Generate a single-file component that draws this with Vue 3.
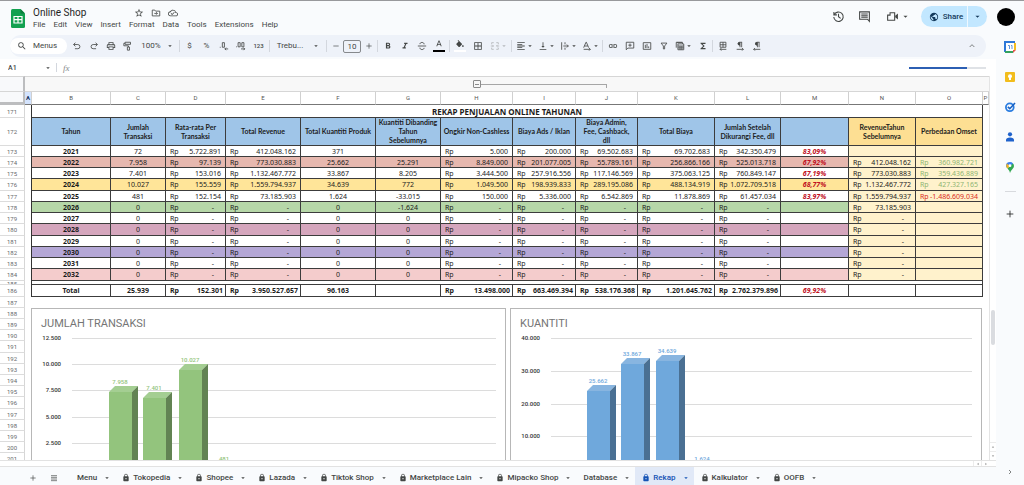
<script setup>
import { h, ref } from 'vue'

const glyphs = {
  search: { f: 'M15.5 14h-.79l-.28-.27A6.47 6.47 0 0 0 16 9.5 6.5 6.5 0 1 0 9.5 16c1.61 0 3.09-.59 4.23-1.57l.27.28v.79l5 4.99L20.49 19l-4.99-5zm-6 0C7.01 14 5 11.99 5 9.5S7.01 5 9.5 5 14 7.01 14 9.5 11.99 14 9.5 14z' },
  undo: { s: 'M8 4 4 8.500l4 4.500M4 8.500h10a5 5 0 0 1 0 10H7' },
  redo: { s: 'M16 4l4 4.500-4 4.500M20 8.500H10a5 5 0 0 0 0 10h7' },
  print: { f: 'M19 8h-1V3H6v5H5c-1.66 0-3 1.34-3 3v6h4v4h12v-4h4v-6c0-1.66-1.34-3-3-3zM8 5h8v3H8V5zm8 12v2H8v-4h8v2zm2-2v-2H6v2H4v-4c0-.55.45-1 1-1h14c.55 0 1 .45 1 1v4h-2z' },
  paint: { s: 'M5 3h13v5H5zM5 5.500H2v6h11v3M10.500 14.500h5V22h-5z' },
  decLess: { s: 'M3 14v2M8 4h5v11H8zM22 19h-8M17 16l-3 3 3 3' },
  decMore: { s: 'M1 13v2M5 4h5v10H5zM14 4h5v10h-5zM12 19h9M18 16l3 3-3 3' },
  bold: { f: 'M15.6 10.79c.97-.67 1.65-1.77 1.65-2.79 0-2.26-1.75-4-4-4H7v14h7.04c2.09 0 3.71-1.7 3.71-3.79 0-1.52-.86-2.82-2.15-3.42zM10 6.500h3c.83 0 1.500.67 1.500 1.500s-.67 1.500-1.500 1.500h-3v-3zm3.500 9H10v-3h3.500c.83 0 1.500.67 1.500 1.500s-.67 1.500-1.500 1.500z' },
  italic: { f: 'M10 4v3h2.21l-3.42 8H6v3h8v-3h-2.21l3.42-8H18V4z' },
  strike: { s: 'M2 12h20M17 8c0-3-2-4.500-5-4.500S7 5 7 7.500M7 16c0 3 2 4.500 5 4.500s5-1.500 5-4' },
  textColor: { f: 'M11 1 5.500 15h2.25l1.12-3h6.25l1.12 3h2.25L13 1h-2zm-1.380 9L12 3.670 14.380 10H9.620z' },
  fill: { f: 'M16.56 8.940 7.620 0 6.210 1.410l2.380 2.380-5.150 5.150a1.490 1.490 0 0 0 0 2.120l5.500 5.500c.29.29.68.44 1.060.44s.77-.15 1.060-.44l5.500-5.500c.59-.58.59-1.530 0-2.120zM19 11.500s-2 2.170-2 3.500c0 1.100.9 2 2 2s2-.9 2-2c0-1.330-2-3.500-2-3.500z' },
  borders: { f: 'M3 3v18h18V3H3zm8 16H5v-6h6v6zm0-8H5V5h6v6zm8 8h-6v-6h6v6zm0-8h-6V5h6v6z' },
  merge: { s: 'M9 4H4v4M15 4h5v4M4 16v4h5M20 16v4h-5M2 12h6M6 9.500 8.500 12 6 14.500M22 12h-6M18 9.500 15.500 12l2.500 2.500' },
  alignLeft: { f: 'M15 15H3v2h12v-2zm0-8H3v2h12V7zM3 13h18v-2H3v2zm0 8h18v-2H3v2zM3 3v2h18V3H3z' },
  alignBottom: { f: 'M16 12h-3V3h-2v9H8l4 4 4-4zM4 19v2h16v-2H4z' },
  overflow: { s: 'M4 3v18M12 3v5M12 16v5M8 12h12M16.500 8.500 20 12l-3.500 3.500' },
  rotate: { s: 'M4 16 9.500 3h1L16 16M6 12h8M4 20h16M17 17l3 3-3 3' },
  link: { f: 'M3.900 12c0-1.710 1.390-3.100 3.100-3.100h4V7H7c-2.760 0-5 2.240-5 5s2.240 5 5 5h4v-1.900H7c-1.710 0-3.100-1.390-3.100-3.100zM8 13h8v-2H8v2zm9-6h-4v1.900h4c1.710 0 3.100 1.390 3.100 3.100s-1.390 3.100-3.100 3.100h-4V17h4c2.760 0 5-2.240 5-5s-2.240-5-5-5z' },
  addComment: { s: 'M3 3h18v14H7l-4 4zM12 6v8M8 10h8' },
  chart: { s: 'M3 4h18v16H3zM8 17V9M12 17V7M16 17v-4' },
  filter: { s: 'M5 5h14l-5.500 7v7h-3v-7z' },
  views: { s: 'M3 16V3h15M7 7h14v14H7zM7 12h14M7 16.500h14M12 12v9M16.500 12v9M4 4h14v3' },
  sigma: { f: 'M18 4H6v2l6.500 6L6 18v2h12v-3h-7l5-5-5-5h7z' },
  sheetDir: { s: 'M5 3h14v12H5zM5 9h14M12 3v12M20 20H5M8 17l-3 3 3 3' },
  ltr: { s: 'M17 3h-6a3.500 3.500 0 0 0 0 7h1M12 3v12M16 3v12M4 20h16M17 17l3 3-3 3', f: 'M12 3h-2a3.500 3.500 0 0 0 0 7h2z' },
  rtl: { s: 'M18 3h-6a3.500 3.500 0 0 0 0 7h1M13 3v12M17 3v12M20 20H4M7 17l-3 3 3 3', f: 'M13 3h-2a3.500 3.500 0 0 0 0 7h2z' },
  up: { s: 'M5 15l7-7 7 7' },
  right: { s: 'M9 6l6 6-6 6' },
  caret: { f: 'M5 9l7 7 7-7z' },
  star: { f: 'M22 9.240l-7.190-.62L12 2 9.190 8.630 2 9.240l5.460 4.730L5.820 21 12 17.270 18.180 21l-1.630-7.030L22 9.240zM12 15.400l-3.760 2.270 1-4.280-3.320-2.880 4.380-.38L12 6.100l1.710 4.040 4.380.38-3.320 2.880 1 4.280L12 15.400z' },
  folder: { s: 'M3 5h6l2 2.500h10V19H3zM8 13h7M12.500 10l3 3-3 3' },
  cloud: { f: 'M19.350 10.040A7.490 7.490 0 0 0 12 4C9.110 4 6.600 5.640 5.350 8.040A5.994 5.994 0 0 0 0 14c0 3.310 2.690 6 6 6h13c2.760 0 5-2.240 5-5 0-2.640-2.050-4.780-4.650-4.960zM19 18H6c-2.210 0-4-1.790-4-4 0-2.050 1.530-3.760 3.560-3.970l1.070-.11.5-.95A5.469 5.469 0 0 1 12 6c2.620 0 4.880 1.860 5.390 4.430l.3 1.500 1.530.11A2.980 2.980 0 0 1 22 15c0 1.650-1.350 3-3 3zm-9-3.820-2.090-2.090L6.500 13.500 10 17l6.010-6.010-1.410-1.410z' },
  history: { s: 'M3.500 3.500v5.500H9M4 9a8.700 8.700 0 1 1-.7 4M12 7v5.500l4 3' },
  comment: { s: 'M3 3.500h18v17.500l-3.500-4H3zM6 7.500h12M6 10.500h12M6 13.500h12' },
  meet: { s: 'M7.500 5H16v14H3V9.500h4.500z', f: 'M17 10.500l5-4v11l-5-4z' },
  globe: { f: 'M12 2C6.480 2 2 6.480 2 12s4.480 10 10 10 10-4.480 10-10S17.520 2 12 2zm-1 17.930c-3.950-.49-7-3.850-7-7.930 0-.62.08-1.210.21-1.790L9 15v1c0 1.100.9 2 2 2v1.930zm6.900-2.540c-.26-.81-1-1.390-1.900-1.390h-1v-3c0-.55-.45-1-1-1H8v-2h2c.55 0 1-.45 1-1V7h2c1.100 0 2-.9 2-2v-.41c2.930 1.190 5 4.060 5 7.410 0 2.080-.8 3.970-2.100 5.390z' },
  lock: { f: 'M18 8h-1V6c0-2.760-2.240-5-5-5S7 3.240 7 6v2H6c-1.100 0-2 .9-2 2v11c0 1.100.9 2 2 2h12c1.100 0 2-.9 2-2V10c0-1.100-.9-2-2-2zm-6 9.500c-1.100 0-2-.9-2-2s.9-2 2-2 2 .9 2 2-.9 2-2 2zM15.100 8H8.900V6c0-1.710 1.390-3.100 3.100-3.100s3.100 1.390 3.100 3.100v2z' },
  plus: { s: 'M12 4v16M4 12h16' },
  minus: { s: 'M4 12h16' },
  list: { s: 'M3 5h18M3 10h18M3 15h18M3 20h18' },
}

const Icon = (props) =>
  h('svg', { viewBox: '0 0 24 24', class: ['icon', 'icon-' + props.name], 'aria-hidden': 'true' }, [
    glyphs[props.name].f && h('path', { d: glyphs[props.name].f, fill: 'currentColor', 'fill-rule': 'evenodd' }),
    glyphs[props.name].s && h('path', { d: glyphs[props.name].s, fill: 'none', stroke: 'currentColor', 'stroke-width': 2 }),
  ])
Icon.props = ['name']

const menus = ['File', 'Edit', 'View', 'Insert', 'Format', 'Data', 'Tools', 'Extensions', 'Help']

const toolsA = [
  { icon: 'undo', label: 'Undo' }, { icon: 'redo', label: 'Redo' },
  { icon: 'print', label: 'Print' }, { icon: 'paint', label: 'Paint format' },
]
const toolsB = [
  { text: '$', label: 'Currency' }, { text: '%', label: 'Percent' },
  { icon: 'decLess', label: 'Decrease decimals' }, { icon: 'decMore', label: 'Increase decimals' },
  { text: '123', label: 'More formats', small: true },
]
const toolsC = [
  { icon: 'bold', label: 'Bold' }, { icon: 'italic', label: 'Italic' },
  { icon: 'strike', label: 'Strikethrough' }, { icon: 'textColor', label: 'Text color', bar: 'ink' },
  { sep: true },
  { icon: 'fill', label: 'Fill color', bar: 'paper' }, { icon: 'borders', label: 'Borders' },
  { icon: 'merge', label: 'Merge cells', drop: true, faded: true },
  { sep: true },
  { icon: 'alignLeft', label: 'Horizontal align', drop: true },
  { icon: 'alignBottom', label: 'Vertical align', drop: true },
  { icon: 'overflow', label: 'Text wrapping', drop: true },
  { icon: 'rotate', label: 'Text rotation', drop: true },
  { sep: true },
  { icon: 'link', label: 'Insert link' }, { icon: 'addComment', label: 'Insert comment' },
  { icon: 'chart', label: 'Insert chart' }, { icon: 'filter', label: 'Create a filter' },
  { icon: 'views', label: 'Filter views', drop: true }, { icon: 'sigma', label: 'Functions' },
  { sep: true },
  { icon: 'sheetDir', label: 'Sheet direction' }, { icon: 'ltr', label: 'Left to right' }, { icon: 'rtl', label: 'Right to left' },
]

const letters = 'ABCDEFGHIJKLMNOP'.split('')
const heads = [
  'Tahun', 'Jumlah\nTransaksi', 'Rata-rata Per\nTransaksi', 'Total Revenue', 'Total Kuantiti Produk',
  'Kuantiti Dibanding\nTahun\nSebelumnya', 'Ongkir Non-Cashless', 'Biaya Ads / Iklan',
  'Biaya Admin,\nFee, Cashback,\ndll', 'Total Biaya', 'Jumlah Setelah\nDikurangi Fee, dll', '',
  'RevenueTahun\nSebelumnya', 'Perbedaan Omset',
]
const money = new Set([2, 3, 6, 7, 8, 9, 10, 12, 13])
const rows = [
  { n: 173, tone: 'plain', c: ['2021', '72', '5.722.891', '412.048.162', '371', '', '5.000', '200.000', '69.502.683', '69.702.683', '342.350.479', '83,09%', '', ''] },
  { n: 174, tone: 'rose', c: ['2022', '7.958', '97.139', '773.030.883', '25.662', '25.291', '8.849.000', '201.077.005', '55.789.161', '256.866.166', '525.013.718', '67,92%', '412.048.162', '360.982.721'] },
  { n: 175, tone: 'plain', c: ['2023', '7.401', '153.016', '1.132.467.772', '33.867', '8.205', '3.444.500', '257.916.556', '117.146.569', '375.063.125', '760.849.147', '67,19%', '773.030.883', '359.436.889'] },
  { n: 176, tone: 'yellow', c: ['2024', '10.027', '155.559', '1.559.794.937', '34.639', '772', '1.049.500', '198.939.833', '289.195.086', '488.134.919', '1.072.709.518', '68,77%', '1.132.467.772', '427.327.165'] },
  { n: 177, tone: 'plain', c: ['2025', '481', '152.154', '73.185.903', '1.624', '-33.015', '150.000', '5.336.000', '6.542.869', '11.878.869', '61.457.034', '83,97%', '1.559.794.937', '-1.486.609.034'] },
  { n: 178, tone: 'green', c: ['2026', '0', '-', '-', '0', '-1.624', '-', '-', '-', '-', '-', '', '73.185.903', ''] },
  ...[[179, '2027', 'plain'], [180, '2028', 'mauve'], [181, '2029', 'plain'], [182, '2030', 'violet'], [183, '2031', 'plain'], [184, '2032', 'pink']].map(
    ([n, year, tone]) => ({ n, tone, c: [year, '0', '-', '-', '0', '0', '-', '-', '-', '-', '-', '', '-', ''] })
  ),
]
const totals = ['Total', '25.939', '152.301', '3.950.527.657', '96.163', '', '13.498.000', '663.469.394', '538.176.368', '1.201.645.762', '2.762.379.896', '69,92%', '', '']
const tail = Array.from({ length: 14 }, (_, i) => 188 + i)

function cellClass(i, v) {
  return {
    year: i === 0,
    pct: i === 11,
    side: i > 11,
    gain: i === 13 && v && v[0] !== '-',
    loss: i === 13 && v && v[0] === '-',
  }
}

const charts = [
  {
    title: 'JUMLAH TRANSAKSI', tone: 'leaf', width: 475, x1: 41, x2: 465, lx: 30,
    grid: [['12.500', 30], ['10.000', 56], ['7.500', 82], ['5.000', 109], ['2.500', 135]],
    bars: [['7.958', 78, 84], ['7.401', 112, 90], ['10.027', 148, 62]], last: ['481', 193],
  },
  {
    title: 'KUANTITI', tone: 'sky', width: 472, x1: 41, x2: 462, lx: 30,
    grid: [['40.000', 30], ['30.000', 63], ['20.000', 96], ['10.000', 128]],
    bars: [['25.662', 77, 83], ['33.867', 111, 56], ['34.639', 146, 53]], last: ['1.624', 192],
  },
]

const tabs = [
  { name: 'Menu' }, { name: 'Tokopedia', lock: true }, { name: 'Shopee', lock: true }, { name: 'Lazada', lock: true },
  { name: 'Tiktok Shop', lock: true }, { name: 'Marketplace Lain', lock: true }, { name: 'Mipacko Shop', lock: true },
  { name: 'Database' }, { name: 'Rekap', lock: true }, { name: 'Kalkulator', lock: true }, { name: 'OOFB', lock: true },
]
const active = ref('Rekap')
const cellName = ref('A1')
const formula = ref('')
const fontSize = ref('10')
</script>

<template>
  <div class="app">
    <header class="top">
      <svg class="logo" viewBox="0 0 14 19" aria-hidden="true">
        <path d="M1.500 0H9.500L14 4.500V17.500Q14 19 12.500 19H1.500Q0 19 0 17.500V1.500Q0 0 1.500 0Z" fill="#12a150" />
        <path d="M9.500 0 14 4.500H9.500Z" fill="#0b7d3c" />
        <path d="M3 7.500H11V14H3ZM3 10.700H11M7 7.500V14" fill="none" stroke="#fff" stroke-width="1.200" />
      </svg>
      <div class="titles">
        <div class="title-row">
          <h1>Online Shop</h1>
          <button aria-label="Star"><Icon name="star" /></button>
          <button aria-label="Move"><Icon name="folder" /></button>
          <button aria-label="Saved to Drive"><Icon name="cloud" /></button>
        </div>
        <nav class="menus">
          <button v-for="m in menus" :key="m">{{ m }}</button>
        </nav>
      </div>
      <div class="actions">
        <button aria-label="Version history"><Icon name="history" /></button>
        <button aria-label="Comments"><Icon name="comment" /></button>
        <button class="meet" aria-label="Join a call"><Icon name="meet" /><Icon name="caret" /></button>
        <div class="share">
          <button class="share-main"><Icon name="globe" />Share</button>
          <button class="share-more" aria-label="Sharing options"><Icon name="caret" /></button>
        </div>
        <button class="avatar" aria-label="Account"></button>
      </div>
    </header>

    <div class="body">
      <main>
        <div class="toolbar">
          <button class="find"><Icon name="search" />Menus</button>
          <button v-for="t in toolsA" :key="t.label" class="tool" :aria-label="t.label"><Icon :name="t.icon" /></button>
          <button class="zoom">100%<Icon name="caret" /></button>
          <i class="sep"></i>
          <button v-for="t in toolsB" :key="t.label" class="tool" :class="{ small: t.small }" :aria-label="t.label">
            <Icon v-if="t.icon" :name="t.icon" /><template v-else>{{ t.text }}</template>
          </button>
          <i class="sep"></i>
          <button class="font">Trebu...<Icon name="caret" /></button>
          <i class="sep"></i>
          <button class="step" aria-label="Decrease font size"><Icon name="minus" /></button>
          <input v-model="fontSize" class="size" aria-label="Font size" />
          <button class="step" aria-label="Increase font size"><Icon name="plus" /></button>
          <i class="sep"></i>
          <template v-for="(t, i) in toolsC" :key="i">
            <i v-if="t.sep" class="sep"></i>
            <button v-else class="tool" :class="[t.bar, { drop: t.drop, faded: t.faded }]" :aria-label="t.label">
              <Icon :name="t.icon" /><Icon v-if="t.drop" name="caret" />
            </button>
          </template>
          <button class="tool collapse" aria-label="Hide menus"><Icon name="up" /></button>
        </div>

        <div class="formula">
          <input v-model="cellName" class="cell-name" aria-label="Name box" />
          <Icon name="caret" />
          <i class="sep"></i>
          <label class="fx" for="fx">fx</label>
          <input id="fx" v-model="formula" class="fx-input" />
          <div class="progress"><div class="progress-fill"></div></div>
        </div>

        <div class="grid-area">
          <div class="sheet">
            <table>
              <colgroup>
                <col class="w25" /><col class="w7" /><col class="w79" /><col class="w55" /><col class="w60" /><col class="w75" />
                <col class="w75" /><col class="w65" /><col class="w72" /><col class="w63" /><col class="w62" /><col class="w77" />
                <col class="w66" /><col class="w68" /><col class="w67" /><col class="w67" /><col class="w6" />
              </colgroup>
              <thead>
                <tr class="groups">
                  <td class="corner"></td>
                  <td colspan="7"></td>
                  <td colspan="3">
                    <div class="group">
                      <button aria-label="Collapse columns"></button><span></span>
                    </div>
                  </td>
                  <td colspan="6"></td>
                </tr>
                <tr class="letters">
                  <td class="corner low"></td>
                  <th v-for="l in letters" :key="l" :class="{ picked: l === 'A' }">{{ l }}</th>
                </tr>
              </thead>
              <tbody>
                <tr class="banner">
                  <th class="num">171</th><td class="edge"></td>
                  <td colspan="14" class="cell">REKAP PENJUALAN ONLINE TAHUNAN</td><td></td>
                </tr>
                <tr class="heads">
                  <th class="num">172</th><td class="edge"></td>
                  <th v-for="(t, i) in heads" :key="i" class="cell" :class="{ gold: i > 11 }">{{ t }}</th><td></td>
                </tr>
              </tbody>
              <tbody class="data">
                <tr v-for="r in rows" :key="r.n" :class="r.tone">
                  <th class="num">{{ r.n }}</th><td class="edge"></td>
                  <td v-for="(v, i) in r.c" :key="i" class="cell" :class="cellClass(i, v)">
                    <div v-if="money.has(i) && v" class="money">
                      <span>Rp</span><span :class="{ dash: v === '-' }">{{ v }}</span>
                    </div>
                    <template v-else>{{ v }}</template>
                  </td>
                  <td></td>
                </tr>
              </tbody>
              <tbody>
                <tr class="thin">
                  <th class="num"><div>185</div></th><td class="edge"></td><td colspan="14" class="cell"></td><td></td>
                </tr>
                <tr class="total">
                  <th class="num">186</th><td class="edge"></td>
                  <td v-for="(v, i) in totals" :key="i" class="cell" :class="{ pct: i === 11 }">
                    <div v-if="money.has(i) && v" class="money"><span>Rp</span><span>{{ v }}</span></div>
                    <template v-else>{{ v }}</template>
                  </td>
                  <td></td>
                </tr>
              </tbody>
              <tbody class="tail">
                <tr>
                  <th class="num">187</th>
                  <td colspan="16" rowspan="15" class="canvas">
                    <div class="charts">
                      <svg v-for="c in charts" :key="c.title" class="chart" :class="c.tone" :viewBox="`0 0 ${c.width} 153`" role="img" :aria-label="c.title">
                        <rect x="0.5" y="0.5" :width="c.width - 1" height="170" class="frame" />
                        <text x="10" y="19" class="chart-title">{{ c.title }}</text>
                        <g v-for="g in c.grid" :key="g[0]">
                          <line :x1="c.x1" :x2="c.x2" :y1="g[1] + 0.5" :y2="g[1] + 0.5" class="line" />
                          <text :x="c.lx" :y="g[1] + 2" class="axis">{{ g[0] }}</text>
                        </g>
                        <g v-for="b in c.bars" :key="b[0]">
                          <rect :x="b[1]" :y="b[2]" width="23" :height="153 - b[2]" class="front" />
                          <path :d="`M${b[1]} ${b[2]}l6-6h23l-6 6z`" class="lid" />
                          <path :d="`M${b[1] + 23} ${b[2]}l6-6V153h-6z`" class="shade" />
                          <text :x="b[1] + 11" :y="b[2] - 8" class="value">{{ b[0] }}</text>
                        </g>
                        <text :x="c.last[1]" y="153" class="value">{{ c.last[0] }}</text>
                      </svg>
                    </div>
                  </td>
                </tr>
                <tr v-for="n in tail" :key="n"><th class="num">{{ n }}</th></tr>
              </tbody>
            </table>
          </div>
          <div class="vbar">
            <div class="thumb"></div>
            <button aria-label="Scroll up"><Icon name="caret" class="flip" /></button>
            <button aria-label="Scroll down"><Icon name="caret" /></button>
          </div>
        </div>

        <div class="hbar">
          <button aria-label="Scroll left"><Icon name="caret" class="left" /></button>
          <button aria-label="Scroll right"><Icon name="caret" class="rightward" /></button>
        </div>
      </main>

      <aside>
        <button aria-label="Calendar">
          <svg viewBox="0 0 12 12"><rect x="1" y="1" width="10" height="10" fill="#fff" /><path d="M1 11V1H11" fill="none" stroke="#2f78d8" stroke-width="2" /><path d="M11 2V9" stroke="#f5bd1f" stroke-width="2" /><path d="M1 11H9" stroke="#35a260" stroke-width="2" /><path d="M9 12V9H12Z" fill="#e5574a" /><path d="M4 4.500h1.500V8M7 4.500h1V8" fill="none" stroke="#5d93dc" /></svg>
        </button>
        <button aria-label="Keep">
          <svg viewBox="0 0 12 12"><rect x="1" y="1" width="10" height="10" rx="1" fill="#f2bd1d" /><circle cx="6" cy="5.200" r="2" fill="#fff" /><rect x="5" y="7" width="2" height="2" fill="#fff" /></svg>
        </button>
        <button aria-label="Tasks">
          <svg viewBox="0 0 12 12"><circle cx="5.800" cy="6.300" r="3.900" fill="none" stroke="#2b7de0" stroke-width="1.800" /><path d="M3.800 5.800 5.800 7.700 11 2" fill="none" stroke="#1761c4" stroke-width="1.600" /></svg>
        </button>
        <button aria-label="Contacts">
          <svg viewBox="0 0 12 12"><circle cx="6" cy="3.300" r="2.100" fill="#1f62cc" /><path d="M2 10.500V9Q2 6.500 6 6.500T10 9V10.500Z" fill="#1f62cc" /></svg>
        </button>
        <button aria-label="Maps">
          <svg viewBox="0 0 12 12"><path d="M6 12Q5.500 9.500 3.500 7.500L8.500 2Q10 3.200 10 5 10 6.500 8.500 8 6.500 10 6 12Z" fill="#34a853" /><path d="M3.300 7.200Q2 6 2 4.500L6 5Z" fill="#fbbc04" /><path d="M2 5Q2 1 6 1 8 1 9 2.400L3.400 7.300Q2 6 2 5Z" fill="#3f82ee" /><path d="M2.800 2.600 6 5 3.400 7.500Q1.300 5 2.800 2.600Z" fill="#f2b51c" /><circle cx="6" cy="4.700" r="1.400" fill="#fff" /></svg>
        </button>
        <hr />
        <button class="add" aria-label="Get add-ons"><Icon name="plus" /></button>
      </aside>
    </div>

    <footer>
      <button class="foot-tool" aria-label="Add sheet"><Icon name="plus" /></button>
      <button class="foot-tool all" aria-label="All sheets"><Icon name="list" /></button>
      <button v-for="t in tabs" :key="t.name" class="tab" :class="{ active: t.name === active }" @click="active = t.name">
        <Icon v-if="t.lock" name="lock" />{{ t.name }}<Icon name="caret" />
      </button>
      <button class="foot-tool show" aria-label="Show side panel"><Icon name="right" /></button>
    </footer>
  </div>
</template>

<style>
body { margin: 0; }
</style>

<style scoped>
.app {
  box-sizing: border-box;
  display: flex;
  flex-direction: column;
  height: 100vh;
  overflow: hidden;
  border-top: 1px solid #98999c;
  background: #f9fbfd;
  color: #444746;
  font: 8px/10px Roboto, "Liberation Sans", sans-serif;
}
.app * { box-sizing: border-box; }
button, input { margin: 0; padding: 0; border: 0; background: none; color: inherit; font: inherit; }
button { display: flex; flex: none; align-items: center; justify-content: center; white-space: nowrap; }
.icon { flex: none; display: block; width: 10px; height: 10px; }
.icon-caret { width: 6px; height: 6px; }

.top { display: flex; height: 34px; flex: none; padding-left: 11px; }
.logo { width: 14px; height: 19px; margin-top: 8px; }
.titles { flex: 1; padding: 6px 0 0 8px; }
.title-row { display: flex; align-items: center; height: 12px; gap: 7px; }
h1 { margin: 0 41px 0 0; color: #1f1f1f; font-size: 10px; font-weight: 400; line-height: 12px; }
.menus { display: flex; gap: 8px; margin-top: 1px; }
.actions { display: flex; align-items: flex-start; padding: 5px 9px 0 0; }
.actions > button { height: 21px; width: 26px; }
.actions .icon { width: 13px; height: 13px; }
.actions .icon-caret { width: 7px; height: 7px; }
.actions .meet { width: 31px; gap: 3px; margin: 0 8px 0 5px; }
.share { display: flex; height: 21px; border-radius: 11px; overflow: hidden; background: #c2e7ff; color: #143a5c; font-weight: 500; }
.share-main { width: 47px; gap: 4px; padding-left: 4px; border-right: 1px solid #eef8ff; }
.share-main .icon { width: 10px; height: 10px; }
.share-more { width: 19px; }
.actions .avatar { width: 18px; height: 18px; margin: 2px 0 0 10px; border-radius: 50%; background: #000; }

.body { display: flex; flex: 1; min-height: 0; }
main { display: flex; flex: 1; flex-direction: column; min-width: 0; }
.toolbar { display: flex; align-items: center; flex: none; height: 22px; margin: 0 10px; border-radius: 11px; background: #eef2f9; overflow: hidden; }
.find { width: 57px; height: 16px; margin-right: 1px; padding-right: 3px; gap: 6px; border-radius: 8px; background: #fff; }
.tool { width: 17px; height: 18px; }
.tool.small { width: 19px; font-size: 6px; font-weight: 500; }
.tool.drop { width: 22px; gap: 1px; }
.tool.faded { width: 24px; color: #b4b7bb; }
.tool.ink, .tool.paper { flex-direction: column; width: 18px; }
.tool.ink::after, .tool.paper::after { content: ""; width: 12px; height: 2px; background: #000; }
.tool.paper::after { background: #fff; }
.collapse { margin: 0 6px 0 auto; }
.collapse .icon { width: 8px; height: 8px; }
.zoom { width: 42px; gap: 6px; }
.font { width: 54px; gap: 10px; }
.step { width: 15px; }
.step .icon { width: 8px; height: 8px; }
.size { width: 18px; height: 13px; border: 1px solid #86898d; border-radius: 2px; text-align: center; }
.sep { flex: none; width: 1px; height: 12px; margin: 0 1px; background: #d3d7de; }

.formula { display: flex; align-items: center; flex: none; height: 17px; margin-top: 2px; padding: 0 10px 0 8px; background: #fff; font-size: 7px; }
.cell-name { width: 37px; font-weight: 500; }
.formula .sep { margin: 0 6px 0 5px; height: 9px; }
.fx { color: #85888c; font: italic 9px/10px "Liberation Serif", serif; }
.fx-input { flex: 1; min-width: 0; height: 12px; margin-left: 6px; }
.progress { width: 77px; height: 2px; background: #dfe2e6; }
.progress-fill { width: 75%; height: 2px; background: #2c5fb3; }

.grid-area { display: flex; flex: 1; min-height: 0; background: #fff; }
.sheet { flex: 1; min-width: 0; overflow: hidden; }
table { width: 100%; table-layout: fixed; border-collapse: separate; border-spacing: 0; color: #1c1c1c; font: 7px/9px "Noto Sans", "Open Sans", sans-serif; }
td, th { padding: 0; height: 11px; text-align: center; }
.w25 { width: 25px; } .w7 { width: 7px; } .w79 { width: 79px; } .w55 { width: 55px; } .w60 { width: 60px; }
.w75 { width: 75px; } .w65 { width: 65px; } .w72 { width: 72px; } .w63 { width: 63px; } .w62 { width: 62px; }
.w77 { width: 77px; } .w66 { width: 66px; } .w68 { width: 68px; } .w67 { width: 67px; } .w6 { width: 6px; }

.groups td { height: 16px; background: #f8f8f8; border-top: 1px solid #d6d6d6; border-bottom: 1px solid #d6d6d6; }
.groups .corner, .letters .corner { border-right: 2px solid #bcbdbf; background: #f8f9fb; }
.letters .corner { border-bottom: 3px solid #bcbdbf; }
.group { display: flex; align-items: center; padding: 0 31px 0 32px; }
.group button { width: 8px; height: 8px; border: 1px solid #8b8b8b; border-radius: 1px; }
.group button::after { content: ""; width: 4px; height: 1px; background: #8b8b8b; }
.group span { flex: 1; height: 4px; margin-top: 4px; border: solid #a6a6a6; border-width: 1px 1px 0 0; }
.letters th { height: 13px; border-right: 1px solid #d0d0d0; border-bottom: 1px solid #777; font: 6px/10px Roboto, sans-serif; color: #555; }
.letters .picked { background: #d3e3fd; color: #17305c; font-weight: 700; }

.num { border-right: 1px solid #d6d6d6; border-bottom: 1px solid #dcdcdc; color: #66696c; font: 6px/9px Roboto, sans-serif; }
.edge { border-right: 1px solid #333; }
.cell { border-right: 1px solid #3c3c3c; border-bottom: 1px solid #3c3c3c; white-space: nowrap; }
.banner td, .banner th { height: 13px; }
.banner .cell { font-size: 8px; font-weight: 700; }
.heads td, .heads th { height: 28px; }
.heads .cell { background: #9fc5e8; font-family: Lato, sans-serif; font-weight: 700; white-space: pre-line; }
.heads .gold { background: #fddf93; }
.data tr:nth-child(4n) > * { height: 12px; }
.rose .cell { background: #e6b8af; }
.yellow .cell { background: #ffe599; }
.green .cell { background: #b6d7a8; }
.mauve .cell { background: #d5a6bd; }
.violet .cell { background: #b4a7d6; }
.pink .cell { background: #f4cccc; }
.data .side { background: #fff2cc; }
.year { font-weight: 700; }
.pct { color: #c1121f; font-weight: 700; font-style: italic; }
.gain { color: #8fb573; }
.loss { color: #d92b1c; }
.money { display: flex; justify-content: space-between; padding: 0 4px; }
.dash { padding-right: 7px; }
.thin td, .thin th { height: 4px; font-size: 0; line-height: 0; }
.thin .num div { height: 3px; overflow: hidden; font-size: 6px; line-height: 6px; }
.total > * { height: 12px; }
.total .cell { font-weight: 700; }
.total .money { padding: 0 2px 0 4px; }
.tail tr:nth-child(5n) .num { height: 12px; }
.tail .canvas { vertical-align: top; padding: 11px 7px 0 6px; }
.charts { display: grid; grid-template-columns: 475fr 472fr; gap: 4px; }
.chart { display: block; width: 100%; font-family: Roboto, sans-serif; }
.frame { fill: #fff; stroke: #b7b7b7; }
.chart-title { font-size: 11px; fill: #757575; }
.line { stroke: #dcdcdc; }
.axis { font-size: 6px; font-weight: 500; text-anchor: end; fill: #333; }
.value { font-size: 6px; font-weight: 500; text-anchor: middle; }
.leaf .front, .leaf .value { fill: #93c47d; }
.leaf .lid { fill: #a4ce92; }
.leaf .shade { fill: #628353; }
.sky .front, .sky .value { fill: #6fa8dc; }
.sky .lid { fill: #88b5e0; }
.sky .shade { fill: #4a7093; }

.vbar { display: flex; flex: none; flex-direction: column; align-items: center; width: 7px; border-left: 1px solid #e4e4e4; color: #777; }
.thumb { width: 4px; height: 35px; margin: 234px 0 auto; border-radius: 2px; background: #dadce0; }
.vbar button { width: 6px; height: 9px; border-top: 1px solid #ececec; }
.vbar .icon, .hbar .icon { width: 4px; height: 4px; }
.flip { transform: rotate(180deg); }
.left { transform: rotate(90deg); }
.rightward { transform: rotate(-90deg); }
.hbar { display: flex; justify-content: flex-end; flex: none; height: 7px; padding-right: 7px; border: solid #e2e2e2; border-width: 1px 0; background: #fff; color: #777; }
.hbar button { width: 8px; height: 5px; border-left: 1px solid #ececec; }

aside { display: flex; flex: none; flex-direction: column; align-items: center; width: 28px; padding-top: 6px; }
aside button { width: 20px; height: 12px; margin-bottom: 18px; }
aside svg { width: 12px; height: 12px; }
aside hr { width: 11px; margin: 0 0 16px; border: 0; border-top: 1px solid #d8dade; }
aside .add .icon { width: 10px; height: 10px; color: #222; }

footer { display: flex; flex: none; height: 18px; padding: 0 4px 0 23px; font-weight: 500; }
.foot-tool { width: 20px; padding-top: 3px; }
.foot-tool .icon { width: 8px; height: 8px; }
.all { margin: 0 6px 0 1px; }
.tab { gap: 3px; padding: 3px 5px 0 7px; }
.tab .icon-lock { width: 8px; height: 9px; }
.tab .icon-caret { margin-left: 4px; }
.active { background: #e1e9f7; color: #1553b5; }
.foot-tool.show { margin-left: auto; padding: 0 0 8px; }
</style>
